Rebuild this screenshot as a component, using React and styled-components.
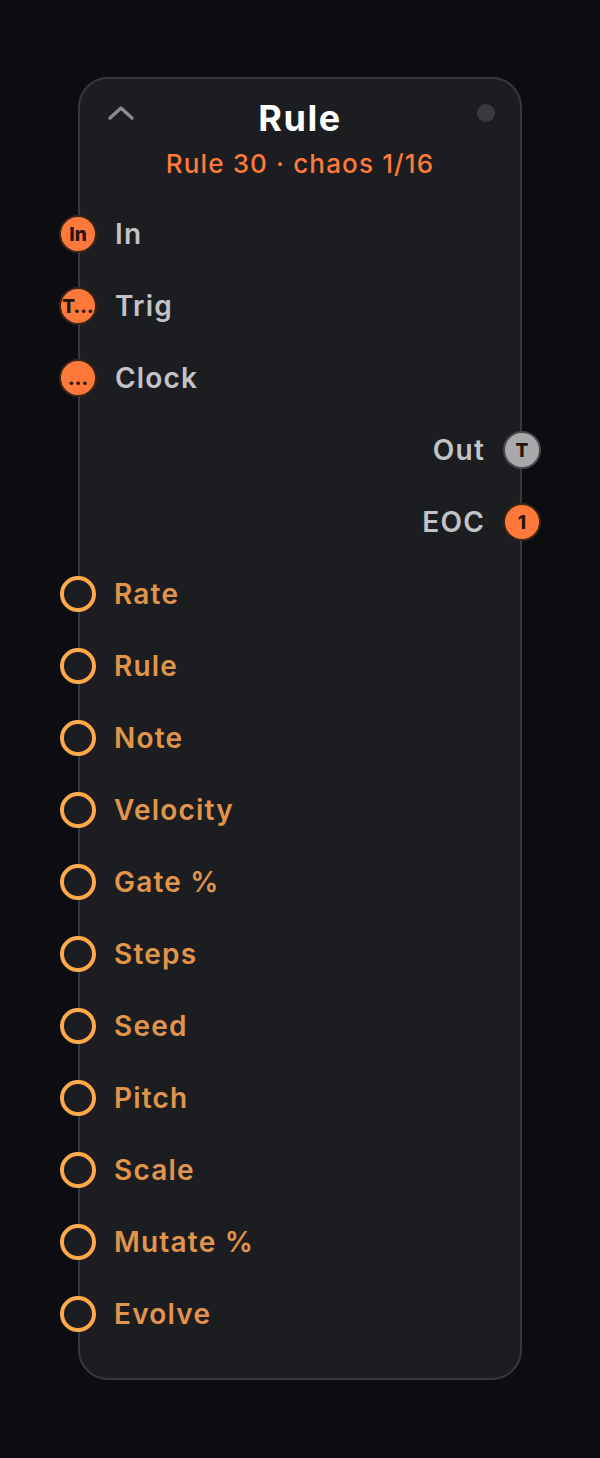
import React from 'react'
import styled, { createGlobalStyle } from 'styled-components';

const inputs = [
    { label: 'In', tag: 'In' },
    { label: 'Trig', tag: 'T…' },
    { label: 'Clock', tag: '…' },
];

const outputs = [
    { label: 'Out', tag: 'T', kind: 'gray' },
    { label: 'EOC', tag: '1', kind: 'orange' },
];

const params = ['Rate', 'Rule', 'Note', 'Velocity', 'Gate %', 'Steps', 'Seed', 'Pitch', 'Scale', 'Mutate %', 'Evolve'];

const App = () => {
    return (
        <Page>
            <GlobalStyle />
            <Card>
                <Header>
                    <Collapse>
                        <svg width="28" height="16" viewBox="0 0 28 16">
                            <path d="M3 13 L14 3 L25 13" fill="none" stroke="#8b8b8f" strokeWidth="3.4" strokeLinecap="round" strokeLinejoin="round" />
                        </svg>
                    </Collapse>
                    <Title>Rule</Title>
                    <Status />
                    <SubTitle>Rule 30 · chaos 1/16</SubTitle>
                </Header>
                {inputs.map((p) => (
                    <Row key={p.label}>
                        <Port side="left" kind="orange">{p.tag}</Port>
                        <Label>{p.label}</Label>
                    </Row>
                ))}
                {outputs.map((p) => (
                    <Row key={p.label} out>
                        <Label>{p.label}</Label>
                        <Port side="right" kind={p.kind}>{p.tag}</Port>
                    </Row>
                ))}
                {params.map((name) => (
                    <Row key={name}>
                        <Ring />
                        <Label param>{name}</Label>
                    </Row>
                ))}
            </Card>
        </Page>
    )
}

const GlobalStyle = createGlobalStyle`
    html, body {
        margin: 0;
        padding: 0;
        background: #0c0d10;
    }
    body {
        font-family: Inter, "Noto Sans", "Liberation Sans", sans-serif;
    }
`;

const Page = styled.div`
    width: 600px;
    min-height: 1458px;
    padding-top: 77px;
    box-sizing: border-box;
    display: flex;
    justify-content: center;
    align-items: flex-start;
`;

const Card = styled.div`
    width: 444px;
    box-sizing: border-box;
    background: #1c1d21;
    border: 2px solid #37383c;
    border-radius: 30px;
    padding: 17px 0 28px;
    display: flex;
    flex-direction: column;
`;

const Header = styled.div`
    display: grid;
    grid-template-columns: 60px 1fr 60px;
    grid-template-rows: 44px 34px;
    row-gap: 7px;
    align-items: center;
    margin-bottom: 17px;
`;

const Collapse = styled.div`
    display: flex;
    justify-content: flex-end;
    padding-right: 5px;
    margin-top: -10px;
    svg { display: block; }
`;

const Title = styled.div`
    text-align: center;
    color: #ffffff;
    font-size: 36px;
    font-weight: 700;
    line-height: 44px;
    letter-spacing: 1.5px;
`;

const Status = styled.div`
    width: 18px;
    height: 18px;
    border-radius: 50%;
    background: #3a3b3f;
    justify-self: start;
    margin-left: 17px;
    margin-top: -10px;
`;

const SubTitle = styled.div`
    grid-column: 1 / 4;
    text-align: center;
    color: #ff7a3a;
    font-size: 26px;
    font-weight: 500;
    line-height: 34px;
    letter-spacing: 1.15px;
`;

const Row = styled.div`
    height: 72px;
    display: flex;
    align-items: center;
    justify-content: ${(p) => (p.out ? 'flex-end' : 'flex-start')};
    gap: 18px;
`;

const Port = styled.div`
    width: 38px;
    height: 38px;
    box-sizing: border-box;
    border-radius: 50%;
    border: 2px solid;
    background: ${(p) => (p.kind === 'gray' ? '#a9a9ab' : '#ff7a3a')};
    border-color: ${(p) => (p.kind === 'gray' ? '#4a4a4d' : '#3a2416')};
    margin-left: ${(p) => (p.side === 'left' ? '-21px' : '0')};
    margin-right: ${(p) => (p.side === 'right' ? '-21px' : '0')};
    display: flex;
    align-items: center;
    justify-content: center;
    color: #24160f;
    font-size: 19px;
    font-weight: 800;
    letter-spacing: 0;
    white-space: nowrap;
    overflow: hidden;
    flex-shrink: 0;
`;

const Ring = styled.div`
    width: 36px;
    height: 36px;
    box-sizing: border-box;
    border-radius: 50%;
    border: 4px solid #ffa94a;
    background: #1c1d21;
    margin-left: -20px;
    flex-shrink: 0;
`;

const Label = styled.div`
    color: ${(p) => (p.param ? '#e0954a' : '#c3c3c7')};
    font-size: 28px;
    font-weight: 600;
    letter-spacing: 1.2px;
`;

export default App
